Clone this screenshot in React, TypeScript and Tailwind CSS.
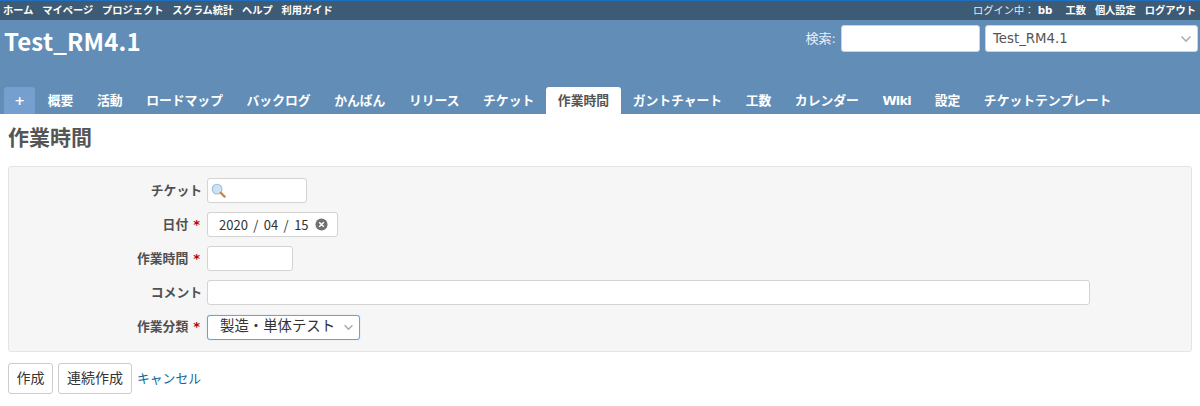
const font = { fontFamily: '"DejaVu Sans", "Noto Sans CJK JP", sans-serif' };
const cjk = { fontFamily: '"Noto Sans CJK JP", sans-serif' };

const topLeft = ["ホーム", "マイページ", "プロジェクト", "スクラム統計", "ヘルプ", "利用ガイド"];
const topRight = ["工数", "個人設定", "ログアウト"];
const tabs = ["概要", "活動", "ロードマップ", "バックログ", "かんばん", "リリース", "チケット", "作業時間", "ガントチャート", "工数", "カレンダー", "Wiki", "設定", "チケットテンプレート"];

function tabClass(t: string) {
  if (t === "作業時間") return "flex items-center rounded-t-[3px] bg-white px-[11.8px] text-[#555555]";
  if (t === "Wiki") return "flex items-center px-[11.8px] tracking-[-0.7px]";
  return "flex items-center px-[11.8px]";
}

function Chevron({ className }: { className: string }) {
  return (
    <svg viewBox="0 0 12 8" className={className} fill="none" stroke="currentColor" strokeWidth="1.6">
      <path d="M1.5 1.5 6 6l4.5-4.5" />
    </svg>
  );
}

function Field({ label, required, children }: { label: string; required?: boolean; children: React.ReactNode }) {
  return (
    <div className="flex h-[34.25px] items-center">
      <label className="w-[198px] pr-[5px] text-right text-[12.8px] font-bold text-[#505050]">
        {label}
        {required && <span className="mr-[2px] ml-[5px] text-[13px] text-[#bb0000]">*</span>}
      </label>
      {children}
    </div>
  );
}

const inputClass = "h-[25px] rounded-[3px] border border-[#d3d3d3] bg-white";

export default function App() {
  return (
    <div className="h-[406px] w-[1200px] overflow-hidden bg-white" style={font}>
      <div className="flex h-[20px] items-center justify-between border-t border-[#1e6fc0] bg-[#3e5b76] pr-[4px] pl-[3px] text-[10.24px] font-bold text-white">
        <div className="flex gap-[8.8px]">
          {topLeft.map((t) => (
            <span key={t}>{t}</span>
          ))}
        </div>
        <div className="flex gap-[9px]">
          <span className="mr-[4px] font-normal text-[#e4ebf2]">
            ログイン中： <b className="text-white">bb</b>
          </span>
          {topRight.map((t) => (
            <span key={t}>{t}</span>
          ))}
        </div>
      </div>

      <div className="relative h-[94px] bg-[#628db6]">
        <div className="flex justify-between pr-[2px] pl-1">
          <h1 className="mt-[5px] text-[24px] leading-[32px] font-bold tracking-[0.2px] text-white" style={cjk}>
            Test_RM4.1
          </h1>
          <div className="mt-[5px] flex h-[27px] items-center text-[13px] text-[#e8eef4]">
            <span className="mr-[5px]">検索:</span>
            <div className="h-[27px] w-[139px] rounded-[3px] border border-[#d3d3d3] bg-white" />
            <div className="ml-[5px] flex h-[27px] w-[213px] items-center justify-between rounded-[3px] border border-[#d3d3d3] bg-white pr-[5px] pl-[7px] text-[13.3px] text-[#555555]">
              Test_RM4.1
              <Chevron className="h-[8px] w-[12px] text-[#b0b0b0]" />
            </div>
          </div>
        </div>
        <div className="absolute bottom-0 left-1 flex h-[27px] text-[12.8px] font-bold text-white">
          <div className="mr-px flex w-[31px] items-center justify-center rounded-t-[3px] bg-[#759fcf]">+</div>
          {tabs.map((t) => (
            <div key={t} className={tabClass(t)}>
              {t}
            </div>
          ))}
        </div>
      </div>

      <div className="px-2">
        <h2 className="mt-[10px] text-[21px] leading-[28px] font-bold text-[#555555]">作業時間</h2>
        <div className="mt-[14px] h-[186px] rounded-[3px] border border-[#e4e4e4] bg-[#f6f6f6] pt-[6px]">
          <Field label="チケット">
            <div className={`${inputClass} flex w-[100px] items-center pl-[3px]`}>
              <svg viewBox="0 0 16 16" className="h-[15px] w-[15px]">
                <circle cx="6.5" cy="6.5" r="5.2" fill="#cfe2f5" stroke="#9dbbdc" strokeWidth="1.2" />
                <path d="M10.5 10.5l4 4" stroke="#c08a50" strokeWidth="2.4" strokeLinecap="round" />
              </svg>
            </div>
          </Field>
          <Field label="日付" required>
            <div
              className={`${inputClass} flex w-[131px] items-center pl-[11px] text-[13px] text-[#333333] [word-spacing:2.5px]`}
              style={cjk}
            >
              2020 / 04 / 15
              <svg viewBox="0 0 14 14" className="mr-[9px] ml-auto h-[13px] w-[13px]">
                <circle cx="7" cy="7" r="6.5" fill="#707070" />
                <path d="M4.5 4.5l5 5M9.5 4.5l-5 5" stroke="#fff" strokeWidth="1.6" />
              </svg>
            </div>
          </Field>
          <Field label="作業時間" required>
            <div className={`${inputClass} w-[86px]`} />
          </Field>
          <Field label="コメント">
            <div className={`${inputClass} w-[883px]`} />
          </Field>
          <Field label="作業分類" required>
            <div className="flex h-[25px] w-[153px] items-center justify-between rounded-[3px] border border-[#5ea6e6] bg-white pr-[5px] pl-[12px] text-[14.4px] text-[#333333] shadow-[0_0_1px_#8cc4f2]">
              製造・単体テスト
              <Chevron className="h-[7px] w-[11px] text-[#a8a8a8]" />
            </div>
          </Field>
        </div>
        <div className="mt-[11px] flex items-center text-[14px] text-[#333333]">
          <button className="h-[31px] w-[45px] rounded-[3px] border border-[#cccccc] bg-white">作成</button>
          <button className="ml-[5px] h-[31px] w-[74px] rounded-[3px] border border-[#cccccc] bg-white">連続作成</button>
          <a className="ml-[5px] text-[12.8px] text-[#169]">キャンセル</a>
        </div>
      </div>
    </div>
  );
}
